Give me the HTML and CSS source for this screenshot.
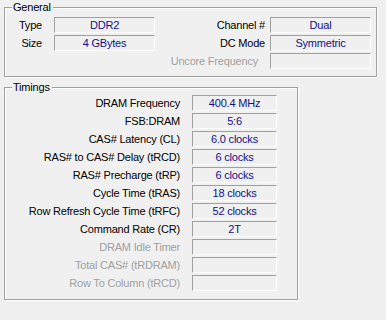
FILE: index.html
```html
<!DOCTYPE html>
<html lang="en">
<head>
    <meta charset="UTF-8">
    <title>Memory</title>
    <link rel="stylesheet" href="styles.css">
</head>
<body>
<div class="group general">
    <span class="caption">General</span>
    <div class="grid">
        <span class="label">Type</span>
        <span class="value">DDR2</span>
        <span class="label right">Channel #</span>
        <span class="value">Dual</span>

        <span class="label">Size</span>
        <span class="value">4 GBytes</span>
        <span class="label right">DC Mode</span>
        <span class="value">Symmetric</span>

        <span class="label off span2">Uncore Frequency</span>
        <span class="value"></span>
    </div>
</div>

<div class="group timings">
    <span class="caption">Timings</span>
    <div class="rows">
        <span class="label">DRAM Frequency</span>
        <span class="value">400.4 MHz</span>
        <span class="label">FSB:DRAM</span>
        <span class="value">5:6</span>
        <span class="label">CAS# Latency (CL)</span>
        <span class="value">6.0 clocks</span>
        <span class="label">RAS# to CAS# Delay (tRCD)</span>
        <span class="value">6 clocks</span>
        <span class="label">RAS# Precharge (tRP)</span>
        <span class="value">6 clocks</span>
        <span class="label">Cycle Time (tRAS)</span>
        <span class="value">18 clocks</span>
        <span class="label">Row Refresh Cycle Time (tRFC)</span>
        <span class="value">52 clocks</span>
        <span class="label">Command Rate (CR)</span>
        <span class="value">2T</span>
        <span class="label off">DRAM Idle Timer</span>
        <span class="value"></span>
        <span class="label off">Total CAS# (tRDRAM)</span>
        <span class="value"></span>
        <span class="label off">Row To Column (tRCD)</span>
        <span class="value"></span>
    </div>
</div>
</body>
</html>
```

FILE: styles.css
```css
*{
    margin:0;
    padding:0;
    box-sizing:border-box;
}
body{
    width:386px;
    height:320px;
    padding:7px 0 0 4px;
    background-color:#f0f0f0;
    font-family:"Liberation Sans", Arial, sans-serif;
    font-size:11px;
    letter-spacing:-0.2px;
    color:#000;
    overflow:hidden;
}
/* etched group box */
.group{
    position:relative;
    border:1px solid #a0a0a0;
    box-shadow:1px 1px 0 #fff, inset 1px 1px 0 #fff;
}
.group .caption{
    position:absolute;
    top:-7px;
    left:7px;
    padding:0 2px 0 1px;
    line-height:13px;
    background-color:#f0f0f0;
}
.general{
    width:373px;
    padding:9px 5px 7px 0;
}
.timings{
    width:294px;
    margin-top:10px;
    padding:7px 20px 8px 0;
}
.label{
    line-height:16px;
    text-align:right;
    white-space:nowrap;
}
.label.off{
    color:#a0a0a0;
}
.value{
    height:16px;
    line-height:14px;
    text-align:center;
    color:#10108c;
    border-top:1px solid #a0a0a0;
    border-left:1px solid #a0a0a0;
    border-right:1px solid #fff;
    border-bottom:1px solid #fff;
}
.general .grid{
    display:grid;
    grid-template-columns:49px 101px 1fr 101px;
    row-gap:2px;
}
.general .label{
    padding-right:12px;
}
.general .label.right{
    padding-right:5px;
}
.general .span2{
    grid-column:3;
}
.timings .rows{
    display:grid;
    grid-template-columns:187px 85px;
    row-gap:2px;
}
.timings .label{
    padding-right:12px;
}
```
